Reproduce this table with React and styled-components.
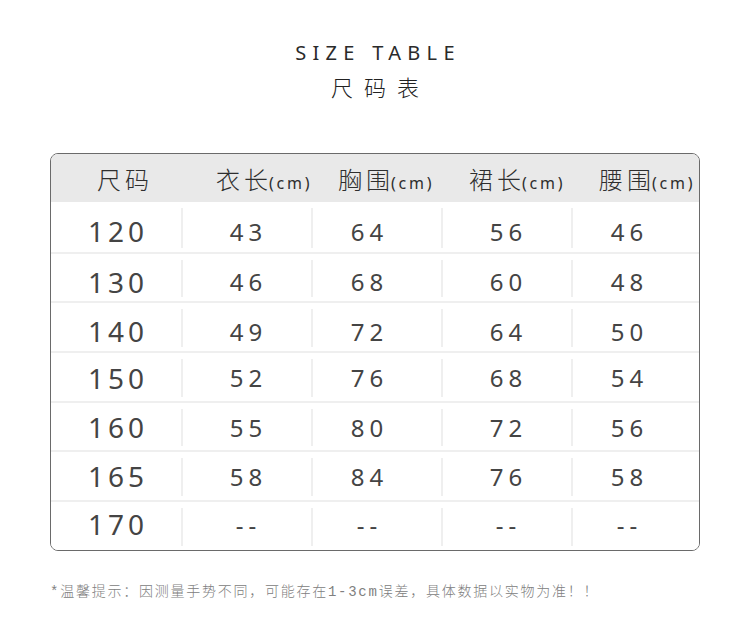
import styled, { createGlobalStyle } from 'styled-components'

const GlobalStyle = createGlobalStyle`
  body {
    margin: 0;
    background: #ffffff;
    font-family: "Noto Sans", "Noto Sans CJK SC", sans-serif;
  }
`

const Page = styled.div`
  width: 750px;
  height: 641px;
  display: flex;
  flex-direction: column;
  align-items: center;
  padding-top: 40px;
  box-sizing: border-box;
`

const TitleEn = styled.div`
  font-family: "Noto Sans", sans-serif;
  font-size: 20px;
  letter-spacing: 6.3px;
  color: #2a2a2a;
  line-height: 26px;
  padding-left: 6px;
`

const TitleCn = styled.div`
  font-family: "Noto Sans CJK SC", sans-serif;
  font-size: 22px;
  font-weight: 300;
  letter-spacing: 11px;
  color: #222;
  line-height: 30px;
  margin-top: 5px;
  padding-left: 11px;
`

const Table = styled.div`
  width: 650px;
  margin-top: 52px;
  border: 1px solid #6a6a6a;
  border-radius: 8px;
  overflow: hidden;
  box-sizing: border-box;
`

const Row = styled.div`
  display: grid;
  grid-template-columns: 130px 130px 130px 130px 1fr;
  height: ${(p) => (p.$head ? '48px' : '49.7px')};
  background: ${(p) => (p.$head ? '#e9e9e9' : '#ffffff')};
  border-top: ${(p) => (p.$first || p.$head ? 'none' : '2px solid #efefef')};
  box-sizing: border-box;
`

const Cell = styled.div`
  position: relative;
  display: flex;
  align-items: center;
  justify-content: center;
  padding-top: ${(p) => Math.max(p.$drop, 0)}px;
  padding-bottom: ${(p) => Math.max(-p.$drop, 0)}px;
  margin-left: ${(p) => p.$shift}px;
  color: #444;
  font-size: ${(p) => (p.$lead ? '28px' : '24px')};
  letter-spacing: ${(p) => (p.$lead ? '4px' : '5px')};
  padding-left: ${(p) => (p.$lead ? '4px' : '5px')};
  &::before {
    content: '';
    display: ${(p) => (p.$lead ? 'none' : 'block')};
    position: absolute;
    left: ${(p) => -p.$shift}px;
    top: 6px;
    bottom: 4px;
    width: 2px;
    background: #efefef;
  }
`

const HeadCell = styled.div`
  display: flex;
  align-items: center;
  justify-content: flex-start;
  padding-left: ${(p) => p.$pad}px;
  color: #2e2e2e;
  white-space: nowrap;
`

const HeadText = styled.span`
  font-family: "Noto Sans CJK SC", sans-serif;
  font-size: 24px;
  font-weight: 300;
  letter-spacing: 4px;
`

const Unit = styled.span`
  font-family: "Noto Sans", sans-serif;
  font-size: 16px;
  letter-spacing: 2.8px;
  margin-left: -3px;
`

const Note = styled.div`
  align-self: flex-start;
  margin-left: 50px;
  margin-top: 29px;
  font-family: "Liberation Mono", "Noto Sans CJK SC", monospace;
  font-size: 14px;
  font-weight: 300;
  letter-spacing: 1.75px;
  color: #808080;
`

const heads = [
  { t: '尺码', pad: 46 },
  { t: '衣长', pad: 35, unit: true },
  { t: '胸围', pad: 27, unit: true },
  { t: '裙长', pad: 28, unit: true },
  { t: '腰围', pad: 28, unit: true },
]

// horizontal nudge per column and vertical drop per row, as in the artwork
const colShift = [0, 0, -18, 0, -16]
const rowDrop = [9, 8, 8, 2, 1, 0, -3]

const rows = [
  ['120', '43', '64', '56', '46'],
  ['130', '46', '68', '60', '48'],
  ['140', '49', '72', '64', '50'],
  ['150', '52', '76', '68', '54'],
  ['160', '55', '80', '72', '56'],
  ['165', '58', '84', '76', '58'],
  ['170', '--', '--', '--', '--'],
]

export default function App() {
  return (
    <Page>
      <GlobalStyle />
      <TitleEn>SIZE TABLE</TitleEn>
      <TitleCn>尺码表</TitleCn>
      <Table>
        <Row $head>
          {heads.map((h) => (
            <HeadCell key={h.t} $pad={h.pad}>
              <span>
                <HeadText>{h.t}</HeadText>
                {h.unit && <Unit>(cm)</Unit>}
              </span>
            </HeadCell>
          ))}
        </Row>
        {rows.map((r, i) => (
          <Row key={r[0]} $first={i === 0}>
            {r.map((v, j) => (
              <Cell key={j} $lead={j === 0} $drop={rowDrop[i]} $shift={colShift[j]}>
                {v}
              </Cell>
            ))}
          </Row>
        ))}
      </Table>
      <Note>*温馨提示：因测量手势不同，可能存在1-3cm误差，具体数据以实物为准！！</Note>
    </Page>
  )
}
